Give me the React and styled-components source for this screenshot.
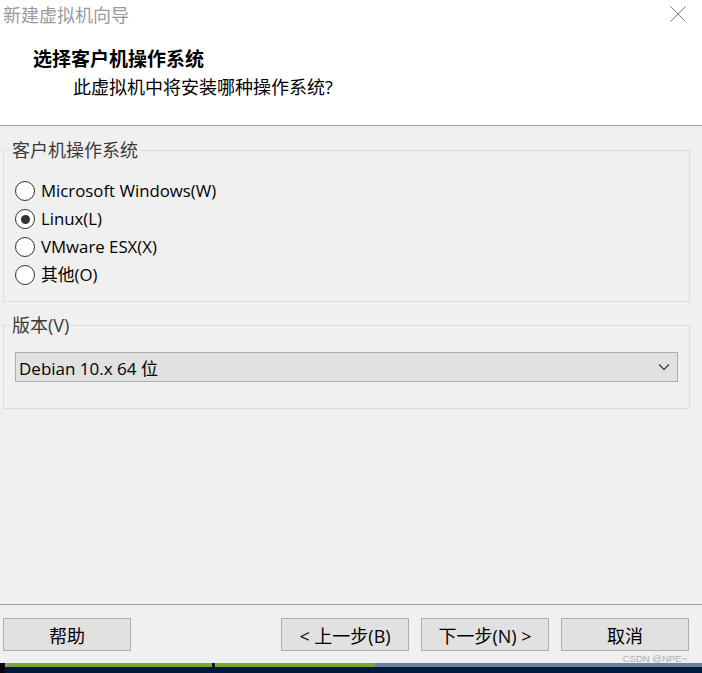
import React from "react";
import styled, { createGlobalStyle } from "styled-components";

const Global = createGlobalStyle`
  html, body { margin: 0; padding: 0; }
  body {
    width: 702px;
    height: 673px;
    overflow: hidden;
    background: #f0f0f0;
    font-family: "Open Sans", "Noto Sans CJK SC", sans-serif;
  }
  * { box-sizing: border-box; }
`;

const Window = styled.div`
  width: 702px;
  height: 673px;
  display: flex;
  flex-direction: column;
  background: #f0f0f0;
  position: relative;
`;

const Header = styled.header`
  height: 126px;
  background: #ffffff;
  border-bottom: 1px solid #a0a0a0;
  display: flex;
  flex-direction: column;
`;

const TitleBar = styled.div`
  height: 28px;
  display: flex;
  align-items: center;
  justify-content: space-between;
  padding: 0 16px 0 3px;
`;

const Title = styled.div`
  font-family: "Noto Sans CJK SC", sans-serif;
  font-size: 18px;
  line-height: 28px;
  color: #9a9a9a;
`;

const CloseIcon = styled.svg`
  width: 16px;
  height: 16px;
  margin-top: -1px;
`;

const Heading = styled.h1`
  margin: 16px 0 0 33px;
  font-family: "Noto Sans CJK SC", sans-serif;
  font-size: 19px;
  font-weight: 700;
  line-height: 28px;
  color: #000;
`;

const Subtitle = styled.p`
  margin: 1px 0 0 73px;
  font-size: 18px;
  line-height: 28px;
  color: #000;
`;

const Body = styled.main`
  flex: 1;
  display: flex;
  flex-direction: column;
`;

const Group = styled.fieldset`
  margin: ${(p) => p.$top}px 12px 0 3px;
  padding: ${(p) => p.$padTop}px 11px ${(p) => p.$padBottom}px 11px;
  border: 1px solid #dcdcdc;
  min-width: 0;
`;

const Legend = styled.legend`
  margin-left: -5px;
  padding: 0 2px;
  font-size: 18px;
  line-height: 20px;
  color: #3a3a3a;
  font-family: "Open Sans", "Noto Sans CJK SC", sans-serif;
`;

const RadioList = styled.div`
  display: flex;
  flex-direction: column;
`;

const RadioRow = styled.label`
  height: 28px;
  display: flex;
  align-items: center;
  gap: 6px;
  font-size: 16.8px;
  color: #000;
`;

const RadioCircle = styled.span`
  width: 20px;
  height: 20px;
  border-radius: 50%;
  border: 1px solid #333;
  background: #fff;
  display: flex;
  align-items: center;
  justify-content: center;
  flex-shrink: 0;
  &::after {
    content: "";
    width: 9px;
    height: 9px;
    border-radius: 50%;
    background: ${(p) => (p.$checked ? "#333" : "transparent")};
  }
`;

const RadioText = styled.span`
  line-height: 20px;
`;

const Select = styled.div`
  height: 30px;
  background: #e1e1e1;
  border: 1px solid #adadad;
  display: flex;
  align-items: center;
  justify-content: space-between;
  padding: 0 7px 0 3px;
  font-size: 17px;
  color: #000;
`;

const Chevron = styled.svg`
  width: 12px;
  height: 8px;
`;

const Footer = styled.footer`
  height: 59px;
  border-top: 1px solid #a0a0a0;
  display: flex;
  align-items: flex-start;
  padding: 13px 13px 0 3px;
  gap: 12px;
`;

const Button = styled.button`
  width: 128px;
  height: 33px;
  background: #e1e1e1;
  border: 1px solid #adadad;
  font-family: "Open Sans", "Noto Sans CJK SC", sans-serif;
  font-size: 18px;
  color: #000;
  padding: 0;
  margin-left: ${(p) => (p.$push ? "auto" : "0")};
  display: flex;
  align-items: center;
  justify-content: center;
`;

const Watermark = styled.div`
  position: absolute;
  right: 15px;
  bottom: 9px;
  font-family: "Liberation Sans", sans-serif;
  font-size: 9.5px;
  color: #a9afb8;
`;

const Strip = styled.div`
  height: 10px;
  background: #001a3d;
  display: flex;
  align-items: flex-start;
`;

const Segment = styled.div`
  height: ${(p) => p.$h || 4}px;
  width: ${(p) => (p.$w ? `${p.$w}px` : "auto")};
  flex: ${(p) => (p.$w ? "none" : 1)};
  background: ${(p) => p.$c};
`;

const radios = [
  { label: "Microsoft Windows(W)", checked: false },
  { label: "Linux(L)", checked: true },
  { label: "VMware ESX(X)", checked: false },
  { label: "其他(O)", checked: false },
];

export default function App() {
  return (
    <>
      <Global />
      <Window>
        <Header>
          <TitleBar>
            <Title>新建虚拟机向导</Title>
            <CloseIcon viewBox="0 0 16 16">
              <path d="M0.5 0.5 L15.5 15.5 M15.5 0.5 L0.5 15.5" stroke="#7a7a7a" strokeWidth="1" fill="none" />
            </CloseIcon>
          </TitleBar>
          <Heading>选择客户机操作系统</Heading>
          <Subtitle>此虚拟机中将安装哪种操作系统?</Subtitle>
        </Header>
        <Body>
          <Group $top={14} $padTop={17} $padBottom={12}>
            <Legend>客户机操作系统</Legend>
            <RadioList>
              {radios.map((r) => (
                <RadioRow key={r.label}>
                  <RadioCircle $checked={r.checked} />
                  <RadioText>{r.label}</RadioText>
                </RadioRow>
              ))}
            </RadioList>
          </Group>
          <Group $top={13} $padTop={17} $padBottom={26}>
            <Legend>版本(V)</Legend>
            <Select>
              <span>Debian 10.x 64 位</span>
              <Chevron viewBox="0 0 12 8">
                <polyline points="1,1.5 6,6.5 11,1.5" stroke="#333" strokeWidth="1.2" fill="none" />
              </Chevron>
            </Select>
          </Group>
        </Body>
        <Footer>
          <Button>帮助</Button>
          <Button $push>&lt; 上一步(B)</Button>
          <Button>下一步(N) &gt;</Button>
          <Button>取消</Button>
        </Footer>
        <Watermark>CSDN @NPE~</Watermark>
        <Strip>
          <Segment $w={5} $h={10} $c="#050505" />
          <Segment $w={2} $c="#8d9bb3" />
          <Segment $w={205} $c="#82a33c" />
          <Segment $w={3} $c="#001a3d" />
          <Segment $w={1} $c="#8d9bb3" />
          <Segment $w={159} $c="#82a33c" />
          <Segment $c="#6e7f99" />
        </Strip>
      </Window>
    </>
  );
}
